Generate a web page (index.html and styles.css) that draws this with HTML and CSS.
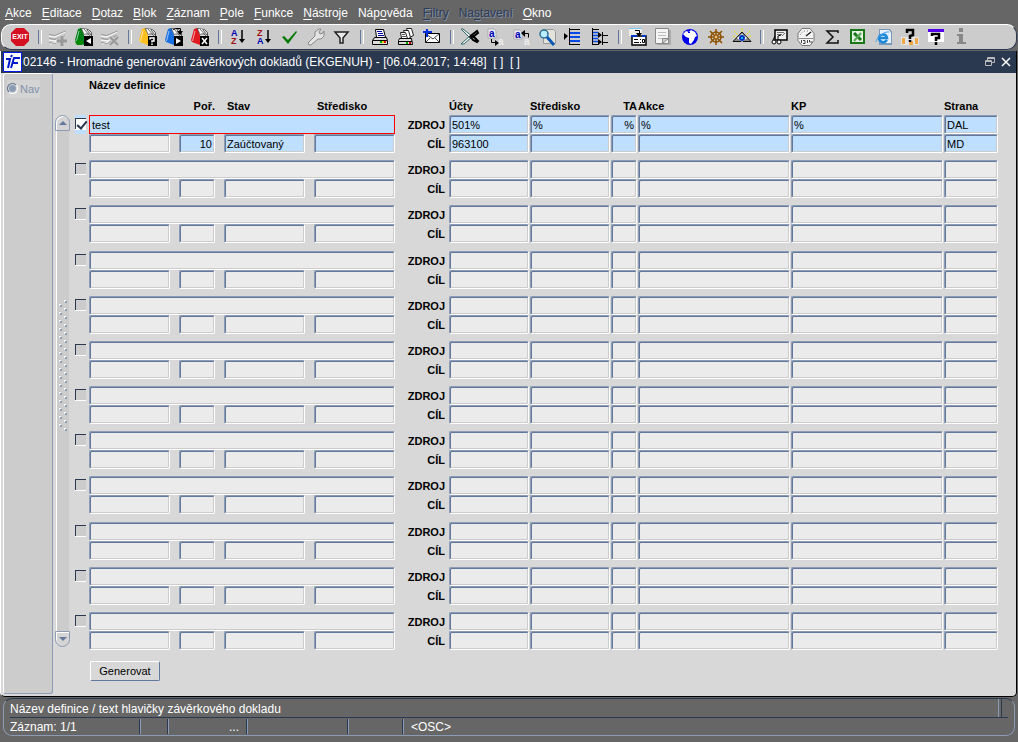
FILE: index.html
```
<!DOCTYPE html>
<html lang="cs">
<head>
<meta charset="utf-8">
<title>Hromadné generování závěrkových dokladů</title>
<link rel="stylesheet" href="styles.css">
</head>
<body>
<svg class="defs" aria-hidden="true">
  <symbol id="papers" viewBox="0 0 20 20">
    <path fill="#ddd" stroke="#555" d="M6.500 1.500l8 1 3 3v4h-9z"/>
    <path fill="#fff" d="M8 2h4l3 5H9z"/>
    <path fill="none" stroke="#444" stroke-width=".8" d="M10 2l6 7M13 3l4 5M11 7h4"/>
    <path fill="currentColor" d="M4 2l3-1 3 7v10l-8-3-1-2z"/>
    <path fill="none" stroke="#fff" stroke-opacity=".6" d="M5 4L2.500 14"/>
    <path fill="none" stroke="#222" stroke-opacity=".6" d="M7.500 2l3 6"/>
    <path fill="#000" d="M10 9h9v10h-9z"/>
  </symbol>
  <symbol id="strips" viewBox="0 0 20 20">
    <path fill="#c2c2c2" d="M1 7l6 1 10-4v9l-6 2-9 3z"/>
    <path fill="none" stroke="#f4f4f4" stroke-width="1.500" d="M1 9l6 1 10-5M1 13l6 1 7-3M2 17l7-2"/>
    <path fill="none" stroke="#999" d="M1 7.500l6 1L17.500 4M1 11.500l6 1 10-4M1 15.500l6 1 4-2"/>
  </symbol>
  <symbol id="printer" viewBox="0 0 20 20">
    <path fill="#fff" stroke="#000" d="M5.500 2.500h8l2 8h-9z"/>
    <path stroke="#00a" d="M7 4.500h5M8 6.500h5M8 8.500h6"/>
    <path fill="#ddd" stroke="#000" d="M4.500 10.500h12l1 3v4h-15v-4z"/>
    <path stroke="#000" d="M3 13.500h14"/>
    <path fill="#0a0" d="M10 14h2v2h-2z"/><path fill="#e8d000" d="M12 14h2v2h-2z"/><path fill="#d00" d="M14 14h2v2h-2z"/>
  </symbol>
</svg>

<div class="app">
  <nav class="menu" aria-label="Hlavní nabídka">
    <button><u>A</u>kce</button><button><u>E</u>ditace</button><button><u>D</u>otaz</button><button><u>B</u>lok</button><button><u>Z</u>áznam</button><button><u>P</u>ole</button><button><u>F</u>unkce</button><button><u>N</u>ástroje</button><button>Náp<u>o</u>věda</button><button disabled><u>F</u>iltry</button><button disabled>Na<u>s</u>tavení</button><button><u>O</u>kno</button>
  </nav>

  <div class="toolbar" role="toolbar" aria-label="Nástroje">
    <button aria-label="Konec"><svg viewBox="0 0 20 20"><path fill="#d40f22" d="M6 1h8l5 5v8l-5 5H6l-5-5V6z"/><text x="10" y="12" class="exit">EXIT</text></svg></button>
    <i></i>
    <button aria-label="Vložit záznam" disabled><svg viewBox="0 0 20 20"><use href="#strips"/><path stroke="#ccc" stroke-width="5" d="M14 8v11M8 14h11"/><path stroke="#999" stroke-width="3" d="M14 9v10M9 14h10"/></svg></button>
    <button aria-label="Obnovit" class="green"><svg viewBox="0 0 20 20"><use href="#papers"/><path fill="#fff" d="M17 11v6l-5-3z"/><path fill="#080" d="M1 15l4-3 4 3-1 3H3z"/></svg></button>
    <button aria-label="Smazat záznam" disabled><svg viewBox="0 0 20 20"><use href="#strips"/><path stroke="#ccc" stroke-width="4" d="M10 10l8 8M18 10l-8 8"/><path stroke="#999" stroke-width="2" d="M10 10l8 8M18 10l-8 8"/></svg></button>
    <i></i>
    <button aria-label="Zadat dotaz" class="yellow"><svg viewBox="0 0 20 20"><use href="#papers"/><path fill="none" stroke="#fff" stroke-width="1.500" d="M12 12.500V11h4v3h-2v1.500M14 16.500V18"/></svg></button>
    <button aria-label="Provést dotaz" class="blue"><svg viewBox="0 0 20 20"><use href="#papers"/><path fill="#fff" d="M12 11l5 3-5 3z"/><path fill="none" stroke="#000" d="M9 2.500l3-1h4.500V5"/><path fill="#000" d="M13 4h6l-3 4z"/></svg></button>
    <button aria-label="Zrušit dotaz" class="red"><svg viewBox="0 0 20 20"><use href="#papers"/><path stroke="#fff" stroke-width="1.500" d="M12 11l5 6M17 11l-5 6"/></svg></button>
    <i></i>
    <button aria-label="Řadit vzestupně"><svg viewBox="0 0 20 20"><text x="3" y="9" class="az blueText">A</text><text x="3" y="17" class="az redText">Z</text><path stroke="#000" stroke-width="1.500" d="M14 3v10"/><path d="M11 12h6l-3 4z"/></svg></button>
    <button aria-label="Řadit sestupně"><svg viewBox="0 0 20 20"><text x="3" y="9" class="az redText">Z</text><text x="3" y="17" class="az blueText">A</text><path stroke="#000" stroke-width="1.500" d="M14 3v10"/><path d="M11 12h6l-3 4z"/></svg></button>
    <button aria-label="Potvrdit"><svg viewBox="0 0 20 20"><path fill="#007a00" d="M2 10l2-1 4 4 8-9 1 1-9 12z"/></svg></button>
    <button aria-label="Nastavit" disabled><svg viewBox="0 0 20 20"><path fill="#e4e4e4" stroke="#888" d="M2 16l7-7V5l4-3h2l-2 3 1 2 3-1 1-2v5l-3 3h-3l-7 6H3z"/></svg></button>
    <button aria-label="Filtr"><svg viewBox="0 0 20 20"><path fill="#e8e8e8" stroke="#222" stroke-width="1.500" d="M3 5h13l-5 6v5H8v-5z"/></svg></button>
    <i></i>
    <button aria-label="Tisk"><svg viewBox="0 0 20 20"><use href="#printer"/></svg></button>
    <button aria-label="Tisk sestavy"><svg viewBox="0 0 20 20"><path fill="#fff" stroke="#222" d="M10.500 1.500h5l2 7-4 2z"/><path fill="#fff" stroke="#222" d="M7.500 3.500h5l2 7-4 2z"/><path fill="#fff" stroke="#222" d="M4.500 5.500h5l2 6h-6z"/><path stroke="#555" d="M6 7.500h3M6 9.500h4"/><path fill="#ddd" stroke="#000" d="M3.500 11.500h12l1 6h-14v-4zM3 14.500h13"/><path fill="#0a0" d="M10 15h2v2h-2z"/><path fill="#d00" d="M13 15h2v2h-2z"/></svg></button>
    <button aria-label="Odeslat zprávu"><svg viewBox="0 0 20 20"><path fill="#fff" stroke="#000" d="M3.500 6.500h14v9h-14z"/><path fill="none" stroke="#444" d="M4 7l7 5 6-5M4 15l4-4M17 15l-4-4"/><path stroke="#0030e0" stroke-width="2" d="M5 2v8M1 5h9"/></svg></button>
    <i></i>
    <button aria-label="Vyjmout"><svg viewBox="0 0 20 20"><path fill="#f4f4f4" stroke="#366" d="M1 2l2 0 10 8-2 2zM1 17l11-10 1 2L4 17z"/><path fill="none" stroke="#000" stroke-width="2" d="M10 10l3-3 4-3 1 2-4 3h-4l4 1 4 4-1 1-4-2-3-4"/></svg></button>
    <button aria-label="Kopírovat"><svg viewBox="0 0 20 20"><path fill="#e8e8f4" stroke="#888" stroke-width=".5" d="M2 2h6l2 2v7H2z"/><text x="3" y="10" class="aa blueText">a</text><text x="12" y="18" class="aa paleText">a</text><path fill="none" stroke="#000" d="M5.500 12v3.500h4"/><path d="M9 13l4 3-4 3z"/></svg></button>
    <button aria-label="Vložit"><svg viewBox="0 0 20 20"><path fill="#e8e8f4" stroke="#888" stroke-width=".5" d="M2 3h6l2 2v7H2z"/><text x="3" y="11" class="aa blueText">a</text><text x="12" y="18" class="aa paleText">a</text><path fill="none" stroke="#000" d="M11 6.500h5.500v4"/><path d="M13 3v7L9 6z"/></svg></button>
    <button aria-label="Detail"><svg viewBox="0 0 20 20"><path fill="#e4e4dc" stroke="#999" d="M5.500 2.500h10l2 2v12h-12z"/><circle cx="6" cy="7" r="4" fill="#b9eeff" stroke="#2d6e96" stroke-width="1.500"/><path stroke="#0c58b4" stroke-width="3" d="M9 10l7 8"/></svg></button>
    <button aria-label="Seznam"><svg viewBox="0 0 20 20"><path d="M0 6l4 3-4 4z"/><path stroke="#000" d="M5.500 1v17M6 2.500h10M6 17.500h10"/><path stroke="#0048e8" stroke-width="2" d="M6 6h10M6 10h10M6 14h10"/></svg></button>
    <button aria-label="Seznam s vazbami"><svg viewBox="0 0 20 20"><path stroke="#000" d="M2.500 1v17M12.500 5v13M3 17.500h6M3 2.500h6M13 8.500h5M13 15.500h5"/><path stroke="#0048e8" stroke-width="1.500" d="M3 5.500h5M3 8.500h5M3 11.500h5M3 14.500h5"/><path d="M8 5l4 3-4 3zM8 12l4 3-4 3z"/></svg></button>
    <i></i>
    <button aria-label="Kopie záznamu"><svg viewBox="0 0 20 20"><path fill="#f0f0e8" d="M1 2h13v7H1z"/><path stroke="#78c8f8" d="M1 1.500h13"/><path fill="#fff" stroke="#000" stroke-width="1.500" d="M4 9h14v9H4z"/><path stroke="#0038c0" stroke-width="2" d="M3 9h6M14 9h4"/><path stroke="#000" d="M6 12.500h4M6 15.500h5M12.500 12v1M12.500 15v1M14.500 12.500h2v3h-2z" fill="none"/><path fill="none" stroke="#000" d="M7 3.500h4.500V6"/><path d="M8 6h6l-3 4z"/></svg></button>
    <button aria-label="Poznámka"><svg viewBox="0 0 20 20"><path fill="#aaa" d="M3 3h14v15H3z"/><path fill="#f4f4f4" stroke="#888" d="M1.500 1.500h13v15h-13z"/><path stroke="#bbb" d="M4 5.500h8M4 8.500h8M4 11.500h4"/><path fill="#ccc" stroke="#888" d="M8.500 16.500v-5h6z"/></svg></button>
    <button aria-label="Web"><svg viewBox="0 0 20 20"><circle cx="10" cy="10" r="8" fill="#0000e8"/><path fill="#fff" d="M3 7l3-3 3 1 2-2 4 2 2 4-2 1-1 3-3 4-2-1V11L6 10z"/><path fill="#0000e8" d="M8 5h2v1H8z"/></svg></button>
    <button aria-label="Řízení"><svg viewBox="0 0 20 20"><g fill="none" stroke="#8c5000"><path stroke-width="1.500" d="M10 2v16M2 10h16M4 4l12 12M16 4L4 16"/><circle cx="10" cy="10" r="5" stroke-width="1.500"/></g><circle cx="10" cy="10" r="2" fill="#f0c080" stroke="#8c5000"/></svg></button>
    <button aria-label="Náhled"><svg viewBox="0 0 20 20"><path stroke="#f0e000" stroke-dasharray="2 1" d="M2 4l4 4M10 1v4M18 4l-4 4M1 9l4 2M19 9l-4 2"/><path fill="#888" stroke="#111" d="M1 14.500L10 5l9 9.500z"/><path fill="#fff" d="M5 11l5-4 5 4-5 4z"/><circle cx="10" cy="11" r="3" fill="#0030c0"/><circle cx="10" cy="11" r="1" fill="#0ef"/></svg></button>
    <i></i>
    <button aria-label="Prezentace"><svg viewBox="0 0 20 20"><path fill="#eee" stroke="#000" stroke-width="1.500" d="M5 3h12v10H5z"/><path stroke="#777" d="M7 5.500h7M7 7.500h5M12 9l3-3"/><circle cx="4" cy="15" r="2" fill="#fff" stroke="#000"/><circle cx="9" cy="15" r="2" fill="#fff" stroke="#000"/><path stroke="#000" fill="none" d="M3 13l2-4M8 13V9l3-1"/></svg></button>
    <button aria-label="Počítadlo"><svg viewBox="0 0 20 20"><path fill="#f4f4f4" stroke="#777" d="M6 1.500h8l4 5v7l-4 5H6l-4-5v-7z"/><path stroke="#222" stroke-width="1.500" d="M10 9l5-4"/><path fill="none" stroke="#777" stroke-dasharray="1 2" d="M4 8l3-4h6"/><path stroke="#888" d="M3 11.500h14"/><path fill="none" stroke="#444" d="M5.500 13v3M7 13.500h2v3H7M11.500 13v3M13.500 13v2h3"/></svg></button>
    <button aria-label="Součet"><svg viewBox="0 0 20 20"><path fill="none" stroke="#111" stroke-width="1.500" d="M16 6V4H5l6 6-6 6h11v-3"/></svg></button>
    <button aria-label="Export do Excelu"><svg viewBox="0 0 20 20"><path fill="#e4f0e4" stroke="#187818" stroke-width="2" d="M3 3h13v13H3z"/><path stroke="#187818" stroke-width="3" d="M6 6l7 7"/><path stroke="#58a858" stroke-width="2" d="M13 6l-7 8"/></svg></button>
    <button aria-label="Prohlížeč"><svg viewBox="0 0 20 20"><path fill="#7a98bc" d="M5 2h11l2 3v13H5z"/><path fill="#e8f0fa" d="M6 3h9l2 3v10H6z"/><path fill="none" stroke="#1c88d8" stroke-width="2.500" d="M13 13c-3 4-8 2-8-2s7-5 8 0H6"/><path fill="none" stroke="#48a0e8" d="M2 15c0-4 8-11 13-10"/></svg></button>
    <button aria-label="Kdo je kdo"><svg viewBox="0 0 20 20"><path fill="#e4e4e4" d="M1 10h18v8H1z"/><path fill="#f0a848" d="M2 11h3v6H2zM9 14h4v4H9zM15 11h3v6h-3z"/><path fill="none" stroke="#000" stroke-width="2.500" d="M7 6V3h6v5l-3 1v3M10 13v2"/></svg></button>
    <button aria-label="Nápověda"><svg viewBox="0 0 20 20"><path fill="#fff" d="M2 3h16v12H2z"/><path fill="#5000e8" d="M2 2h16v3H2z"/><path fill="none" stroke="#000" stroke-width="2.500" d="M6 9V7h7v4h-3v3M10 15v3"/></svg></button>
    <button aria-label="Informace" disabled><svg viewBox="0 0 20 20"><path fill="#888" d="M7 1h4v4H7zM5 7h6v8h3v2H5v-2h2V9H5z"/></svg></button>
  </div>

  <main class="window">
    <header class="title">
      <svg class="logo" viewBox="0 0 19 20"><path fill="#fff" stroke="#0018e8" d="M.5.500h18v19H.5z"/><path fill="none" stroke="#0018c8" stroke-width="2" d="M3 7h4L5 16M9 3L8 5M8 16l3-10h6M10 11h5"/></svg>
      <h1>02146 - Hromadné generování závěrkových dokladů (EKGENUH) - [06.04.2017; 14:48]&nbsp; [ ]&nbsp; [ ]</h1>
      <button aria-label="Obnovit okno"><svg viewBox="0 0 12 12"><path fill="none" stroke="#bbb" d="M3.500 4V1.500h7v5H8M1.500 4.500h6v5h-6zM1 5.500h7M3 2.500h8"/></svg></button>
      <button aria-label="Zavřít okno"><svg viewBox="0 0 12 12"><path stroke="#fff" stroke-width="1.500" d="M2 2l8 8M10 2l-8 8"/></svg></button>
    </header>
    <div class="body">
      <aside class="side"><label><input type="radio" disabled>Nav</label></aside>
      <form class="form">
        <h2>Název definice</h2>
        <div class="heads">
          <div class="left-heads"><b></b><b class="end">Poř.</b><b class="in">Stav</b><b class="in">Středisko</b></div>
          <div class="right-heads"><b>Účty</b><b>Středisko</b><b class="end">TA</b><b>Akce</b><b>KP</b><b>Strana</b></div>
        </div>
        <div class="area">
          <div class="scroll">
            <button type="button" class="up" aria-label="Nahoru"></button>
            <div class="track"><svg width="9" height="131"><defs><pattern id="dots" width="9" height="8" patternUnits="userSpaceOnUse"><path fill="#fff" d="M5 0h2v2H5zM0 4h2v2H0z"/><path fill="#8c9cb4" d="M6 1h2v2H6zM1 5h2v2H1z"/><path fill="#fff" d="M5 0h2v1H5zM5 0h1v2H5zM0 4h2v1H0zM0 4h1v2H0z"/></pattern></defs><path fill="url(#dots)" d="M0 0h9v131H0z"/></svg></div>
            <button type="button" class="down" aria-label="Dolů"></button>
          </div>
          <div class="records" id="records"></div>
        </div>
        <button type="button" class="generate">Generovat</button>
      </form>
    </div>
  </main>

  <footer class="status">
    <div class="hint">Název definice / text hlavičky závěrkového dokladu</div>
    <div class="cells"><span>Záznam: 1/1</span><span></span><span>...</span><span></span><span></span><span>&lt;OSC&gt;</span></div>
  </footer>
</div>
<script src="app.js"></script>
</body>
</html>
```
FILE: styles.css
```
* { box-sizing: border-box; }
body { margin: 0; background: #666; color: #000; font: 11px/14px "Liberation Sans", Arial, sans-serif; }
button { font: inherit; color: inherit; background: none; border: 0; padding: 0; margin: 0; }
h1, h2 { margin: 0; font: inherit; }
.defs { display: none; }
.app { display: flex; flex-direction: column; min-height: 100vh; padding-bottom: 6px; }

.menu { display: flex; gap: 10px; height: 24px; padding: 2px 5px 0; color: #fff; font-size: 12px; }
.menu button:disabled { color: #303c54; text-shadow: 1px 1px #8090a8; }
.menu u { text-underline-offset: 2px; }

.toolbar { display: flex; align-items: center; height: 26px; margin: 0 1px; padding-left: 5px; background: #ccc; border: 1px solid #2a3850; border-top-color: #fff; border-left-color: #fff; border-radius: 10px; }
.toolbar button { width: 26px; height: 20px; display: flex; justify-content: center; }
.toolbar svg { width: 20px; height: 20px; }
.toolbar i { width: 12px; height: 14px; padding-left: 5px; }
.toolbar i::before { content: ""; display: block; width: 2px; height: 14px; border-left: 1px solid #64789c; border-right: 1px solid #fff; }
.exit { font: bold 7px "Liberation Sans", sans-serif; fill: #fff; text-anchor: middle; }
.az { font: bold 9px "Liberation Sans", sans-serif; }
.aa { font: bold 10px "Liberation Sans", sans-serif; }
.blueText { fill: #0000b0; }
.redText { fill: #a01010; }
.paleText { fill: #eee; }
.green { color: #008018; }
.yellow { color: #ffc020; }
.blue { color: #1870e0; }
.red { color: #e01820; }

.window { flex: 1; display: flex; flex-direction: column; margin: 1px 1px 0 0; background: #d8d8d8; border-left: 1px solid #fff; border-right: 1px solid #000; border-bottom: 1px solid #000; border-radius: 0 0 5px 5px; }
.title { display: flex; align-items: center; gap: 4px; height: 22px; padding: 0 4px 0 2px; background: #2a3850; color: #fff; font-size: 12px; }
.title h1 { flex: 1; margin-left: -3px; white-space: nowrap; }
.logo { width: 19px; height: 20px; }
.title button, .title button svg { display: block; width: 12px; height: 12px; }

.body { flex: 1; display: flex; padding: 0 18px 2px 2px; }
.side { width: 50px; flex: none; padding: 6px 3px; background: #ccc; border: 1px solid #8c9cb4; border-top-color: #fff; border-left-color: #fff; border-radius: 3px; }
.side label { display: flex; align-items: center; gap: 2px; width: 33px; height: 18px; background: #d4d4d4; color: #8090a8; }
.side input { appearance: none; width: 11px; height: 11px; margin: 0 0 2px; border: 1px solid #64748c; border-right-color: #fff; border-bottom-color: #fff; border-radius: 50%; background: #8c9cb4; box-shadow: inset 0 0 0 1px #ddd; }

.form { flex: 1; min-width: 0; display: flex; flex-direction: column; padding: 5px 0 13px 2px; }
.form h2 { padding-left: 34px; font-weight: bold; }
.heads { display: flex; gap: 54px; padding: 7px 0 2px 34px; }
.left-heads, .sub { display: grid; grid-template-columns: 81px 36px 81px 81px; gap: 9px; width: 306px; }
.right-heads, .line { display: grid; grid-template-columns: 80px 80px 26px 1fr 1fr 54px; gap: 1px; flex: 1; }
.end { text-align: right; }
.in { padding-left: 3px; }

.area { flex: 1; display: flex; gap: 5px; }
.scroll { width: 15px; display: flex; flex-direction: column; padding-bottom: 4px; }
.track { flex: 1; display: flex; align-items: center; justify-content: center; padding-bottom: 32px; margin: 0 1px; border-left: 1px solid #fff; background: #ccc; }
.up, .down { height: 16px; display: flex; align-items: center; justify-content: center; border: 1px solid #8c9cb4; background: #d4d4d4; box-shadow: inset 1px 1px #fff; }
.up { border-radius: 8px 8px 0 0; }
.down { border-radius: 0 0 8px 8px; }
.up::before, .down::before { content: ""; border: 4px solid transparent; }
.up::before { border-top: 0; border-bottom-color: #64789c; }
.down::before { border-bottom: 0; border-top-color: #64789c; }

.records { flex: 1; display: flex; flex-direction: column; justify-content: space-between; }
.record { display: flex; }
.tick { width: 11px; height: 19px; flex: none; margin-right: 3px; padding: 3px 0 0; }
.tick input { appearance: none; display: block; position: relative; width: 11px; height: 11px; margin: 0; background: #ccc; border: solid #2a3850; border-width: 1px 0 0 1px; box-shadow: 0 1px #fff; }
.active .tick { background: #bedfff; }
.tick input:checked { background: #fff; }
.tick input:checked::after { content: ""; position: absolute; left: 3px; top: 0; width: 4px; height: 8px; border: solid #2a3850; border-width: 0 2px 2px 0; rotate: 40deg; }
.main { width: 306px; flex: none; }
.tags { width: 54px; flex: none; padding: 1px 4px 0 0; font-weight: bold; text-align: right; line-height: 19px; }
.tags span { display: block; }
.lines { flex: 1; min-width: 0; }

.field { display: block; width: 100%; min-width: 0; height: 19px; margin: 0; padding: 0 2px 0 2px; font: inherit; color: #000; background: #ebebeb; border: 1px solid; border-color: #8c9cb4 #fff #fff #8c9cb4; border-radius: 2px; outline: 0; box-shadow: inset 1px 1px #64789c, inset -1px -1px #ccc; }
.field.filled { background: #bedfff; }
.field.current { border: 1px solid #f00; border-radius: 0; box-shadow: none; }
.field.number { text-align: right; }

.generate { align-self: flex-start; width: 70px; height: 20px; margin: 10px 0 0 35px; border: 1px solid #64789c; border-top-color: #fff; border-left-color: #fff; border-radius: 2px; }

.status { margin: 1px 3px 0; height: 38px; padding: 0 6px; color: #fff; font-size: 12px; border: 1px solid #8c9cb4; border-top-color: #2a3850; border-radius: 9px; }
.hint { height: 19px; line-height: 20px; border-bottom: 1px solid #2a3850; display: flex; justify-content: space-between; }
.hint::after { content: ""; width: 2px; height: 18px; margin-right: 6px; border-left: 1px solid #8c9cb4; border-right: 1px solid #2a3850; }
.cells { display: grid; grid-template-columns: 131px 28px 79px 101px 55px 1fr; line-height: 17px; padding-top: 1px; }
.cells span { height: 15px; border-right: 1px solid #8c9cb4; box-shadow: inset -1px 0 #2a3850; line-height: 16px; }
.cells span:nth-child(3) { text-align: right; padding-right: 8px; }
.cells span:last-child { border: 0; box-shadow: none; padding-left: 7px; }
```
FILE: app.js
```
const RECORDS = 12;
const data = [{
  name: "test",
  sub: ["", "10", "Zaúčtovaný", ""],
  source: ["501%", "%", "%", "%", "%", "DAL"],
  target: ["963100", "", "", "", "", "MD"]
}];
const subNames = ["Kód", "Poř.", "Stav", "Středisko"];
const lineNames = ["Účty", "Středisko", "TA", "Akce", "KP", "Strana"];

function field(label, value, classes) {
  return `<input type="text" class="field ${classes}" aria-label="${label}" value="${value}">`;
}

function line(kind, values, filled) {
  return `<div class="line">${lineNames.map((name, i) =>
    field(`${kind} ${name}`, values ? values[i] : "", filled + (i === 2 ? " number" : ""))).join("")}</div>`;
}

function record(item) {
  const filled = item ? "filled" : "";
  return `<div class="record ${item ? "active" : ""}">
    <label class="tick"><input type="checkbox" aria-label="Vybrat" ${item ? "checked" : ""}></label>
    <div class="main">
      ${field("Název definice", item ? item.name : "", item ? "filled current" : "")}
      <div class="sub">${subNames.map((name, i) =>
        field(name, item ? item.sub[i] : "", (i > 0 ? filled : "") + (i === 1 ? " number" : ""))).join("")}</div>
    </div>
    <div class="tags"><span>ZDROJ</span><span>CÍL</span></div>
    <div class="lines">${line("Zdroj", item && item.source, filled)}${line("Cíl", item && item.target, filled)}</div>
  </div>`;
}

document.getElementById("records").innerHTML =
  Array.from({ length: RECORDS }, (_, i) => record(data[i])).join("");
```
